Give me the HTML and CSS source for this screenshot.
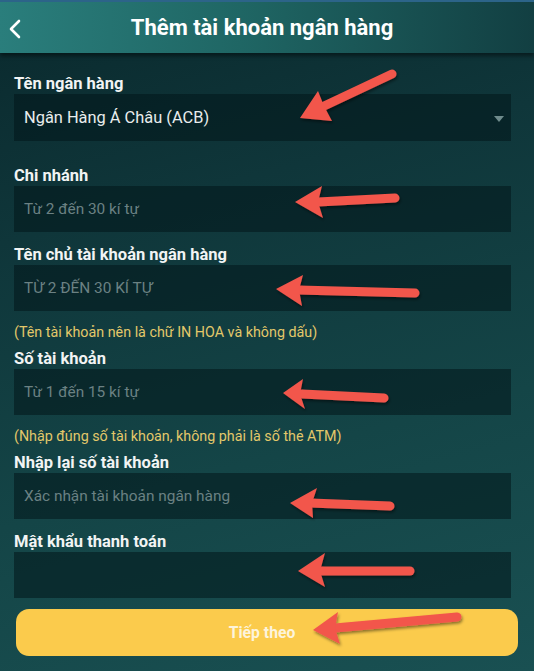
FILE: index.html
```html
<!DOCTYPE html>
<html lang="vi">
<head>
<meta charset="utf-8">
<title>Thêm tài khoản ngân hàng</title>
<link rel="stylesheet" href="styles.css">
</head>
<body>
<div class="screen">
  <header class="topbar">
    <span class="back">
      <svg width="14" height="20" viewBox="0 0 14 20"><path d="M11 2 L3 10 L11 18" fill="none" stroke="#ffffff" stroke-width="2.6" stroke-linecap="round" stroke-linejoin="round"/></svg>
    </span>
    <h1 class="title">Thêm tài khoản ngân hàng</h1>
  </header>

  <main class="form">
    <div class="group first">
      <div class="label">Tên ngân hàng</div>
      <div class="field select">
        <span class="value">Ngân Hàng Á Châu (ACB)</span>
        <span class="caret"></span>
      </div>
    </div>

    <div class="group">
      <div class="label">Chi nhánh</div>
      <div class="field"><span class="ph">Từ 2 đến 30 kí tự</span></div>
    </div>

    <div class="group with-note">
      <div class="label">Tên chủ tài khoản ngân hàng</div>
      <div class="field"><span class="ph">TỪ 2 ĐẾN 30 KÍ TỰ</span></div>
      <div class="note">(Tên tài khoản nên là chữ IN HOA và không dấu)</div>
    </div>

    <div class="group with-note">
      <div class="label">Số tài khoản</div>
      <div class="field"><span class="ph">Từ 1 đến 15 kí tự</span></div>
      <div class="note">(Nhập đúng số tài khoản, không phải là số thẻ ATM)</div>
    </div>

    <div class="group">
      <div class="label">Nhập lại số tài khoản</div>
      <div class="field"><span class="ph">Xác nhận tài khoản ngân hàng</span></div>
    </div>

    <div class="group last">
      <div class="label">Mật khẩu thanh toán</div>
      <div class="field"></div>
    </div>

    <button class="next">Tiếp theo</button>
  </main>

  <svg class="arrows" width="534" height="671" viewBox="0 0 534 671">
    <defs>
      <filter id="sh" x="-20%" y="-20%" width="140%" height="140%">
        <feDropShadow dx="1" dy="2" stdDeviation="1.5" flood-color="#000" flood-opacity="0.45"/>
      </filter>
    </defs>
    <g fill="#f2564c" stroke="#f2564c" stroke-width="9" stroke-linecap="round" filter="url(#sh)">
      <line x1="392" y1="74" x2="322" y2="107"/>
      <polygon stroke="none" points="300,118 318,91 324,106 332,121"/>

      <line x1="395" y1="198" x2="318" y2="202"/>
      <polygon stroke="none" points="295,202 322,186 318,202 323,218"/>

      <line x1="415" y1="293" x2="298" y2="290"/>
      <polygon stroke="none" points="276,289 303,275 299,290 302,306"/>

      <line x1="384" y1="398" x2="302" y2="394"/>
      <polygon stroke="none" points="283,393 303,379 300,394 305,409"/>

      <line x1="390" y1="506" x2="310" y2="503"/>
      <polygon stroke="none" points="290,503 317,488 312,503 313,518"/>

      <line x1="410" y1="571" x2="320" y2="571"/>
      <polygon stroke="none" points="298,571 325,553 320,571 325,587"/>

      <line x1="457" y1="617" x2="335" y2="628"/>
      <polygon stroke="none" points="313,630 338,612 335,628 340,644"/>
    </g>
  </svg>
</div>
</body>
</html>
```

FILE: styles.css
```css
* { box-sizing: border-box; }
html, body { margin: 0; padding: 0; }
body {
  width: 534px;
  height: 671px;
  overflow: hidden;
  font-family: Roboto, "Noto Sans", "DejaVu Sans", sans-serif;
  background: #0f3a3d;
}
.screen {
  position: relative;
  width: 534px;
  height: 671px;
  background: linear-gradient(165deg, #0a292d 0%, #0f363a 30%, #144547 65%, #195052 100%);
  display: flex;
  flex-direction: column;
}
.topbar {
  height: 53px;
  flex: none;
  display: flex;
  align-items: center;
  border-top: 2px solid #2c6489;
  background: linear-gradient(90deg, #2a7e7c 0%, #1f6664 45%, #123f42 100%);
  box-shadow: 0 3px 4px rgba(0,0,0,0.45);
  position: relative;
}
.back {
  width: 30px;
  padding-left: 8px;
  display: flex;
  align-items: center;
  margin-top: 2px;
}
.title {
  flex: 1;
  margin: 0 0 0 -30px;
  text-align: center;
  color: #ffffff;
  font-size: 22px;
  font-weight: 700;
  padding-right: 10px;
  margin-top: 0;
}
.form {
  padding: 21px 23px 0 14px;
  display: flex;
  flex-direction: column;
}
.group {
  display: flex;
  flex-direction: column;
  margin-bottom: 13px;
}
.group.first { margin-bottom: 25px; }
.group.with-note { margin-bottom: 8px; }
.group.last { margin-bottom: 11px; }
.label {
  color: #f2f4f4;
  font-size: 16.5px;
  font-weight: 700;
  line-height: 20px;
  height: 20px;
  white-space: nowrap;
}
.field {
  height: 46px;
  background: rgba(2, 22, 25, 0.55);
  display: flex;
  align-items: center;
  padding-left: 10px;
}
.field.select {
  height: 47px;
  justify-content: space-between;
  padding-right: 7px;
}
.value {
  color: #e9eded;
  font-size: 16.4px;
}
.ph {
  color: #6b8183;
  font-size: 15.4px;
}
.caret {
  width: 0;
  height: 0;
  border-left: 5px solid transparent;
  border-right: 5px solid transparent;
  border-top: 6px solid #6f8b8c;
  margin-top: 2px;
}
.note {
  color: #e3c86a;
  font-size: 14.3px;
  line-height: 18px;
  margin-top: 12px;
  white-space: nowrap;
}
.next {
  margin: 0 -7px 0 2px;
  height: 47px;
  flex: none;
  border: none;
  border-radius: 13px;
  background: #fbcb4c;
  color: #fdf4dc;
  font-family: Roboto, "Noto Sans", sans-serif;
  font-size: 15.7px;
  font-weight: 700;
  padding: 0 10px 0 0;
}
.arrows {
  position: absolute;
  left: 0;
  top: 0;
  pointer-events: none;
}
```
